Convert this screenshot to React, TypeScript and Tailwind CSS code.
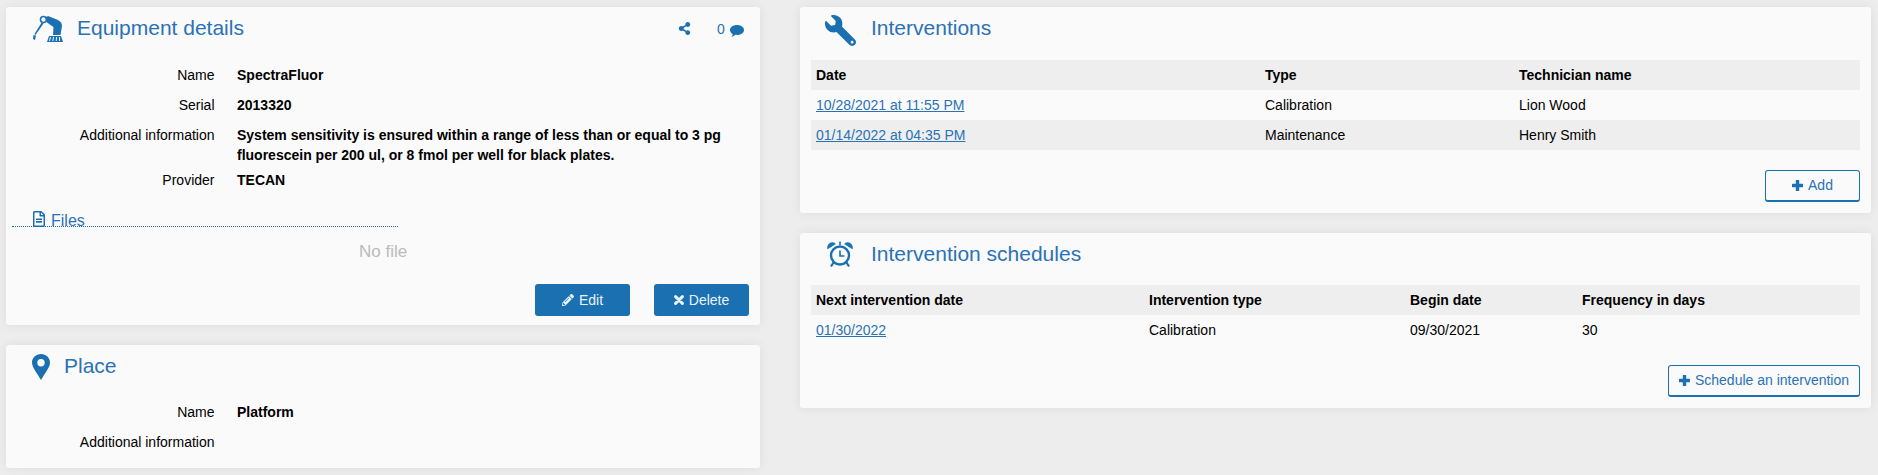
import type { ReactNode } from "react";
import { FaPencilAlt, FaRegFileAlt, FaShareAlt, FaWrench } from "react-icons/fa";

const RobotArm = () => (
  <svg viewBox="0 0 32 28" className="w-[32px] h-[28px]" fill="#1a70b0">
    <path d="M13 2.5 L16 1 L26 5 Q30 7 30 11 L28.5 20 L21 20 L21.5 12 L15 7.5 Z" />
    <circle cx="11.5" cy="4.5" r="3" fill="none" stroke="#1a70b0" strokeWidth="1.6" />
    <path d="M10 7 L11.5 8.5 L3.5 20 L2.5 19 Z" />
    <path d="M1.5 20 L4 20.5 L3 25 L1 24 Z" />
    <path d="M15 27 L17 21 L29 21 L31 27 Z" />
    <path d="M18.5 22 L17.5 26 M21.5 22 L20.8 26 M24.5 22 L24.2 26 M27.5 22 L27.6 26" stroke="#fafafa" strokeWidth="1" />
  </svg>
);

const AlarmClock = () => (
  <svg viewBox="0 0 28 28" className="w-[28px] h-[28px]" fill="none" stroke="#1a70b0">
    <circle cx="14" cy="15.5" r="9" strokeWidth="2.4" />
    <path d="M14 10.5 V16 H18.5" strokeWidth="1.6" />
    <path d="M1.5 9 Q1 3 6.5 2.5 Q8.5 2.5 9.5 4 Z" fill="#1a70b0" strokeWidth="0.5" />
    <path d="M26.5 9 Q27 3 21.5 2.5 Q19.5 2.5 18.5 4 Z" fill="#1a70b0" strokeWidth="0.5" />
    <path d="M14 1.5 V5" strokeWidth="1.6" />
    <path d="M7.5 22.5 L5 26.5 M20.5 22.5 L23 26.5" strokeWidth="2.2" />
  </svg>
);

const Pin = () => (
  <svg viewBox="0 0 18 26" className="w-[18px] h-[26px]" fill="#1a70b0">
    <path fillRule="evenodd" d="M9 0 C14 0 18 3.6 18 8.6 C18 13.5 12.5 20 9 26 C5.5 20 0 13.5 0 8.6 C0 3.6 4 0 9 0 Z M9 5 A3.7 3.7 0 1 0 9 12.4 A3.7 3.7 0 1 0 9 5 Z" />
  </svg>
);

const Cross = () => (
  <svg viewBox="0 0 10 10" className="w-[10px] h-[10px]" stroke="currentColor" strokeWidth="3" strokeLinecap="round">
    <path d="M1.6 1.6 L8.4 8.4 M8.4 1.6 L1.6 8.4" />
  </svg>
);

const Plus = () => (
  <svg viewBox="0 0 11 11" className="w-[11px] h-[11px] -mt-[1px]" fill="#1a70b0">
    <path d="M3.8 0.5 Q3.8 0 4.3 0 H6.7 Q7.2 0 7.2 0.5 V3.8 H10.5 Q11 3.8 11 4.3 V6.7 Q11 7.2 10.5 7.2 H7.2 V10.5 Q7.2 11 6.7 11 H4.3 Q3.8 11 3.8 10.5 V7.2 H0.5 Q0 7.2 0 6.7 V4.3 Q0 3.8 0.5 3.8 H3.8 Z" />
  </svg>
);

const Bubble = () => (
  <svg viewBox="0 0 14 12" className="w-[14px] h-[12px]" fill="#1a70b0">
    <path d="M7 0 C10.9 0 14 2.2 14 5 C14 7.8 10.9 10 7 10 C6.4 10 5.8 9.95 5.2 9.85 C4.2 10.8 2.9 11.6 1.5 11.9 C2.1 11 2.6 10 2.7 9 C1 8.1 0 6.6 0 5 C0 2.2 3.1 0 7 0 Z" />
  </svg>
);

const Card = ({ className, children }: { className: string; children: ReactNode }) => (
  <div className={`bg-[#fafafa] rounded-[3px] shadow-[0_0_12px_rgba(0,0,0,0.07)] ${className}`}>{children}</div>
);

const Title = ({ children, className }: { children: ReactNode; className: string }) => (
  <h2 className={`text-[21px] leading-[24px] text-[#2a72b5] font-normal ${className}`}>{children}</h2>
);

const Field = ({ label, children, className = "h-[30px]" }: { label: string; children?: ReactNode; className?: string }) => (
  <div className={`flex items-start pt-[7px] ${className}`}>
    <div className="w-[208.5px] text-right leading-[16px]">{label}</div>
    <div className="ml-[22.5px] w-[510px] font-bold leading-[20px] -mt-[2px]">{children}</div>
  </div>
);

const SolidButton = ({ icon, label }: { icon: ReactNode; label: string }) => (
  <button className="w-[95px] h-[32px] rounded-[3px] bg-[#1a70b0] text-[#e8f4ff] flex items-center justify-center gap-[5px]">
    {icon}
    {label}
  </button>
);

const OutlineButton = ({ label, className }: { label: string; className: string }) => (
  <button className={`h-[32px] rounded-[3px] border border-b-2 border-[#1a70b0] text-[#2a72b5] flex items-center justify-center gap-[5px] ${className}`}>
    <Plus />
    {label}
  </button>
);

const Row = ({ cols, cells, className = "" }: { cols: string; cells: ReactNode[]; className?: string }) => (
  <div className={`grid h-[30px] items-center ${cols} ${className}`}>
    {cells.map((c, i) => (
      <div key={i} className="pl-[5px]">{c}</div>
    ))}
  </div>
);

const DateLink = ({ children }: { children: string }) => (
  <a href="#" className="text-[#2a72b5] underline">{children}</a>
);

const interventionCols = "grid-cols-[449px_254px_1fr]";
const scheduleCols = "grid-cols-[333px_261px_172px_1fr]";

export default function App() {
  return (
    <div className="min-h-screen bg-[#ededed] text-[14px] text-black pt-[7px] pl-[6px] flex gap-[40px] font-['Liberation_Sans',Arial,sans-serif]">
      <div className="w-[754px] flex flex-col gap-[20px]">
        <Card className="h-[318px] flex flex-col">
          <div className="flex items-start h-[53px] pt-[8px] relative">
            <div className="ml-[26px] w-[39px]"><RobotArm /></div>
            <Title className="ml-[6px] pt-[1px]">Equipment details</Title>
            <FaShareAlt className="absolute left-[672px] top-[15px] w-[13px] h-[13px] text-[#1a70b0]" />
            <span className="absolute left-[711px] top-[12px] text-[#2a72b5]">0</span>
            <div className="absolute left-[724px] top-[18px]"><Bubble /></div>
          </div>
          <Field label="Name">SpectraFluor</Field>
          <Field label="Serial">2013320</Field>
          <Field label="Additional information" className="h-[45px]">
            System sensitivity is ensured within a range of less than or equal to 3 pg fluorescein per 200 ul, or 8 fmol per well for black plates.
          </Field>
          <Field label="Provider">TECAN</Field>
          <div className="mt-[13px] ml-[6px] w-[386px] h-[19px] border-b border-dotted border-[#1a70b0] pl-[20px] flex items-start gap-[5px] text-[16px] leading-[22px] text-[#2a72b5]">
            <FaRegFileAlt className="w-[14px] h-[16px] mt-[3px] text-[#1a70b0] shrink-0" />
            <span className="mt-[2px]">Files</span>
          </div>
          <div className="w-[754px] pl-[353px] mt-[15px] text-[17px] leading-[20px] text-[#bbbbbb]">No file</div>
          <div className="flex justify-end gap-[24px] pr-[11px] mt-[22px]">
            <SolidButton icon={<FaPencilAlt className="w-[12px] h-[12px]" />} label="Edit" />
            <SolidButton icon={<Cross />} label="Delete" />
          </div>
        </Card>
        <Card className="h-[123px]">
          <div className="flex items-start h-[52px] pt-[9px]">
            <div className="ml-[26px]"><Pin /></div>
            <Title className="ml-[14px]">Place</Title>
          </div>
          <Field label="Name">Platform</Field>
          <Field label="Additional information" />
        </Card>
      </div>
      <div className="w-[1071px] flex flex-col gap-[20px]">
        <Card className="h-[206px] px-[11px]">
          <div className="flex items-start h-[53px] pt-[8px]">
            <FaWrench className="ml-[14px] w-[31px] h-[31px] -scale-x-100 text-[#1a70b0]" />
            <Title className="ml-[15px] pt-[1px]">Interventions</Title>
          </div>
          <Row cols={interventionCols} className="bg-[#eeeeee] font-bold" cells={["Date", "Type", "Technician name"]} />
          <Row cols={interventionCols} cells={[<DateLink>10/28/2021 at 11:55 PM</DateLink>, "Calibration", "Lion Wood"]} />
          <Row cols={interventionCols} className="bg-[#eeeeee]" cells={[<DateLink>01/14/2022 at 04:35 PM</DateLink>, "Maintenance", "Henry Smith"]} />
          <div className="flex justify-end mt-[20px]">
            <OutlineButton label="Add" className="w-[95px]" />
          </div>
        </Card>
        <Card className="h-[175px] px-[11px]">
          <div className="flex items-start h-[52px] pt-[7px]">
            <div className="ml-[15px]"><AlarmClock /></div>
            <Title className="ml-[17px] pt-[2px]">Intervention schedules</Title>
          </div>
          <Row cols={scheduleCols} className="bg-[#eeeeee] font-bold" cells={["Next intervention date", "Intervention type", "Begin date", "Frequency in days"]} />
          <Row cols={scheduleCols} cells={[<DateLink>01/30/2022</DateLink>, "Calibration", "09/30/2021", "30"]} />
          <div className="flex justify-end mt-[20px]">
            <OutlineButton label="Schedule an intervention" className="w-[192px]" />
          </div>
        </Card>
      </div>
    </div>
  );
}
